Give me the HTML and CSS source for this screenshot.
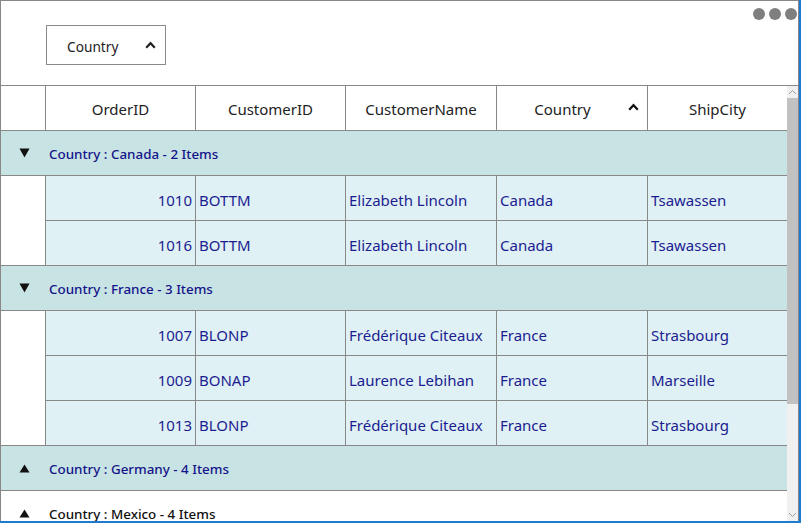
FILE: index.html
```html
<!DOCTYPE html>
<html>
<head>
<meta charset="utf-8">
<link rel="stylesheet" href="styles.css">
</head>
<body>
<div class="frame">
  <div class="app">
    <div class="groupbar">
      <div class="chip">
        <span class="chip-label">Country</span>
        <svg class="caret" width="11" height="8" viewBox="0 0 11 8"><path d="M1.2 6.8 L5.5 2.2 L9.8 6.8" fill="none" stroke="#222" stroke-width="2.2"/></svg>
      </div>
      <div class="dots"><span></span><span></span><span></span></div>
    </div>
    <div class="body">
      <div class="grid">
        <div class="row header">
          <div class="cell indent"></div>
          <div class="cell hc">OrderID</div>
          <div class="cell hc">CustomerID</div>
          <div class="cell hc">CustomerName</div>
          <div class="cell hc sorted"><span class="hlabel">Country</span><svg class="caret" width="11" height="8" viewBox="0 0 11 8"><path d="M1.2 6.8 L5.5 2.2 L9.8 6.8" fill="none" stroke="#111" stroke-width="2.2"/></svg></div>
          <div class="cell hc last-col">ShipCity</div>
        </div>

        <div class="group sel">
          <div class="gicon"><svg width="11" height="10" viewBox="0 0 11 10"><polygon points="0.5,0.5 10.5,0.5 5.5,9.5" fill="#111"/></svg></div>
          <div class="gtext">Country : Canada - 2 Items</div>
        </div>
        <div class="row data">
          <div class="cell indent"></div>
          <div class="cell num">1010</div>
          <div class="cell">BOTTM</div>
          <div class="cell">Elizabeth Lincoln</div>
          <div class="cell">Canada</div>
          <div class="cell last-col">Tsawassen</div>
        </div>
        <div class="row data end">
          <div class="cell indent"></div>
          <div class="cell num">1016</div>
          <div class="cell">BOTTM</div>
          <div class="cell">Elizabeth Lincoln</div>
          <div class="cell">Canada</div>
          <div class="cell last-col">Tsawassen</div>
        </div>

        <div class="group sel">
          <div class="gicon"><svg width="11" height="10" viewBox="0 0 11 10"><polygon points="0.5,0.5 10.5,0.5 5.5,9.5" fill="#111"/></svg></div>
          <div class="gtext">Country : France - 3 Items</div>
        </div>
        <div class="row data">
          <div class="cell indent"></div>
          <div class="cell num">1007</div>
          <div class="cell">BLONP</div>
          <div class="cell">Frédérique Citeaux</div>
          <div class="cell">France</div>
          <div class="cell last-col">Strasbourg</div>
        </div>
        <div class="row data">
          <div class="cell indent"></div>
          <div class="cell num">1009</div>
          <div class="cell">BONAP</div>
          <div class="cell">Laurence Lebihan</div>
          <div class="cell">France</div>
          <div class="cell last-col">Marseille</div>
        </div>
        <div class="row data end">
          <div class="cell indent"></div>
          <div class="cell num">1013</div>
          <div class="cell">BLONP</div>
          <div class="cell">Frédérique Citeaux</div>
          <div class="cell">France</div>
          <div class="cell last-col">Strasbourg</div>
        </div>

        <div class="group sel">
          <div class="gicon"><svg width="11" height="9" viewBox="0 0 11 9"><polygon points="0.5,8.5 10.5,8.5 5.5,0.5" fill="#111"/></svg></div>
          <div class="gtext">Country : Germany - 4 Items</div>
        </div>
        <div class="group plain">
          <div class="gicon"><svg width="11" height="9" viewBox="0 0 11 9"><polygon points="0.5,8.5 10.5,8.5 5.5,0.5" fill="#111"/></svg></div>
          <div class="gtext">Country : Mexico - 4 Items</div>
        </div>
      </div>
      <div class="scrollbar">
        <div class="sb-btn"><svg width="9" height="6" viewBox="0 0 9 6"><path d="M1 5 L4.5 1.5 L8 5" fill="none" stroke="#a0a0a0" stroke-width="1"/></svg></div>
        <div class="sb-track"><div class="sb-thumb"></div></div>
        <div class="sb-btn"><svg width="9" height="6" viewBox="0 0 9 6"><path d="M1 1 L4.5 4.5 L8 1" fill="none" stroke="#a0a0a0" stroke-width="1"/></svg></div>
      </div>
    </div>
  </div>
</div>
</body>
</html>
```

FILE: styles.css
```css
* { box-sizing: border-box; }
html, body { margin: 0; padding: 0; background: #ffffff; }
body { font-family: "Noto Sans", "Open Sans", sans-serif; overflow: hidden; }

.frame {
  width: 801px;
  height: 523px;
  border-right: 2px solid #1f7ad2;
  border-bottom: 2px solid #1f7ad2;
  overflow: hidden;
}
.app {
  width: 799px;
  height: 521px;
  border: 1px solid #888888;
  border-bottom: none;
  display: flex;
  flex-direction: column;
  overflow: hidden;
}

.groupbar {
  height: 85px;
  flex: none;
  border-bottom: 1px solid #888888;
  display: flex;
  align-items: flex-start;
}
.chip {
  margin-left: 45px;
  margin-top: 24px;
  width: 120px;
  height: 40px;
  border: 1px solid #8a8a8a;
  display: flex;
  align-items: center;
  padding-left: 20px;
  padding-right: 9px;
  padding-top: 2px;
  font-size: 13.7px;
  color: #222;
}
.chip .caret { margin-top: -3px; }
.chip-label { flex: 1; }
.dots {
  margin-left: auto;
  margin-top: 7px;
  margin-right: 1px;
  display: flex;
  gap: 4px;
}
.dots span {
  width: 12px;
  height: 12px;
  border-radius: 50%;
  background: #7f7f7f;
}

.body {
  flex: 1;
  display: flex;
  min-height: 0;
}
.grid {
  width: 786px;
  flex: none;
  display: flex;
  flex-direction: column;
  overflow: hidden;
}
.row {
  display: grid;
  grid-template-columns: 45px 150px 150px 151px 151px 1fr;
  height: 45px;
  flex: none;
}
.cell {
  border-right: 1px solid #888888;
  border-bottom: 1px solid #888888;
  display: flex;
  align-items: center;
  padding: 0 3px;
  font-size: 15px;
  white-space: nowrap;
  overflow: hidden;
}
.cell.last-col { border-right: none; }
.header .cell {
  color: #222222;
  justify-content: center;
  padding-top: 2px;
}
.header .hc.sorted { justify-content: flex-start; padding-left: 0; padding-right: 8px; }
.header .hc.sorted .hlabel { flex: 1; text-align: center; padding-left: 0; }
.header .hc.sorted .caret { margin-top: -4px; }
.data .cell {
  background: #dff1f4;
  color: #1c1c91;
  padding-top: 4px;
}
.data .cell.indent { background: #ffffff; border-bottom: none; }
.data.end .cell.indent { border-bottom: 1px solid #888888; }
.cell.num { justify-content: flex-end; }

.group {
  height: 45px;
  flex: none;
  display: flex;
  align-items: center;
  border-bottom: 1px solid #888888;
  font-size: 13.4px;
  font-weight: 500;
}
.group.sel { background: #c8e3e4; color: #14148a; }
.group.plain { background: #ffffff; color: #111; }
.gicon {
  width: 45px;
  display: flex;
  justify-content: center;
  padding-left: 2px;
}
.gtext { padding-left: 3px; padding-top: 1px; }

.scrollbar {
  width: 11px;
  flex: none;
  background: #f0f0f0;
  display: flex;
  flex-direction: column;
}
.sb-btn {
  height: 12px;
  flex: none;
  display: flex;
  align-items: center;
  justify-content: center;
}
.sb-track { flex: 1; }
.sb-thumb {
  height: 306px;
  background: #c1c1c1;
}
```
